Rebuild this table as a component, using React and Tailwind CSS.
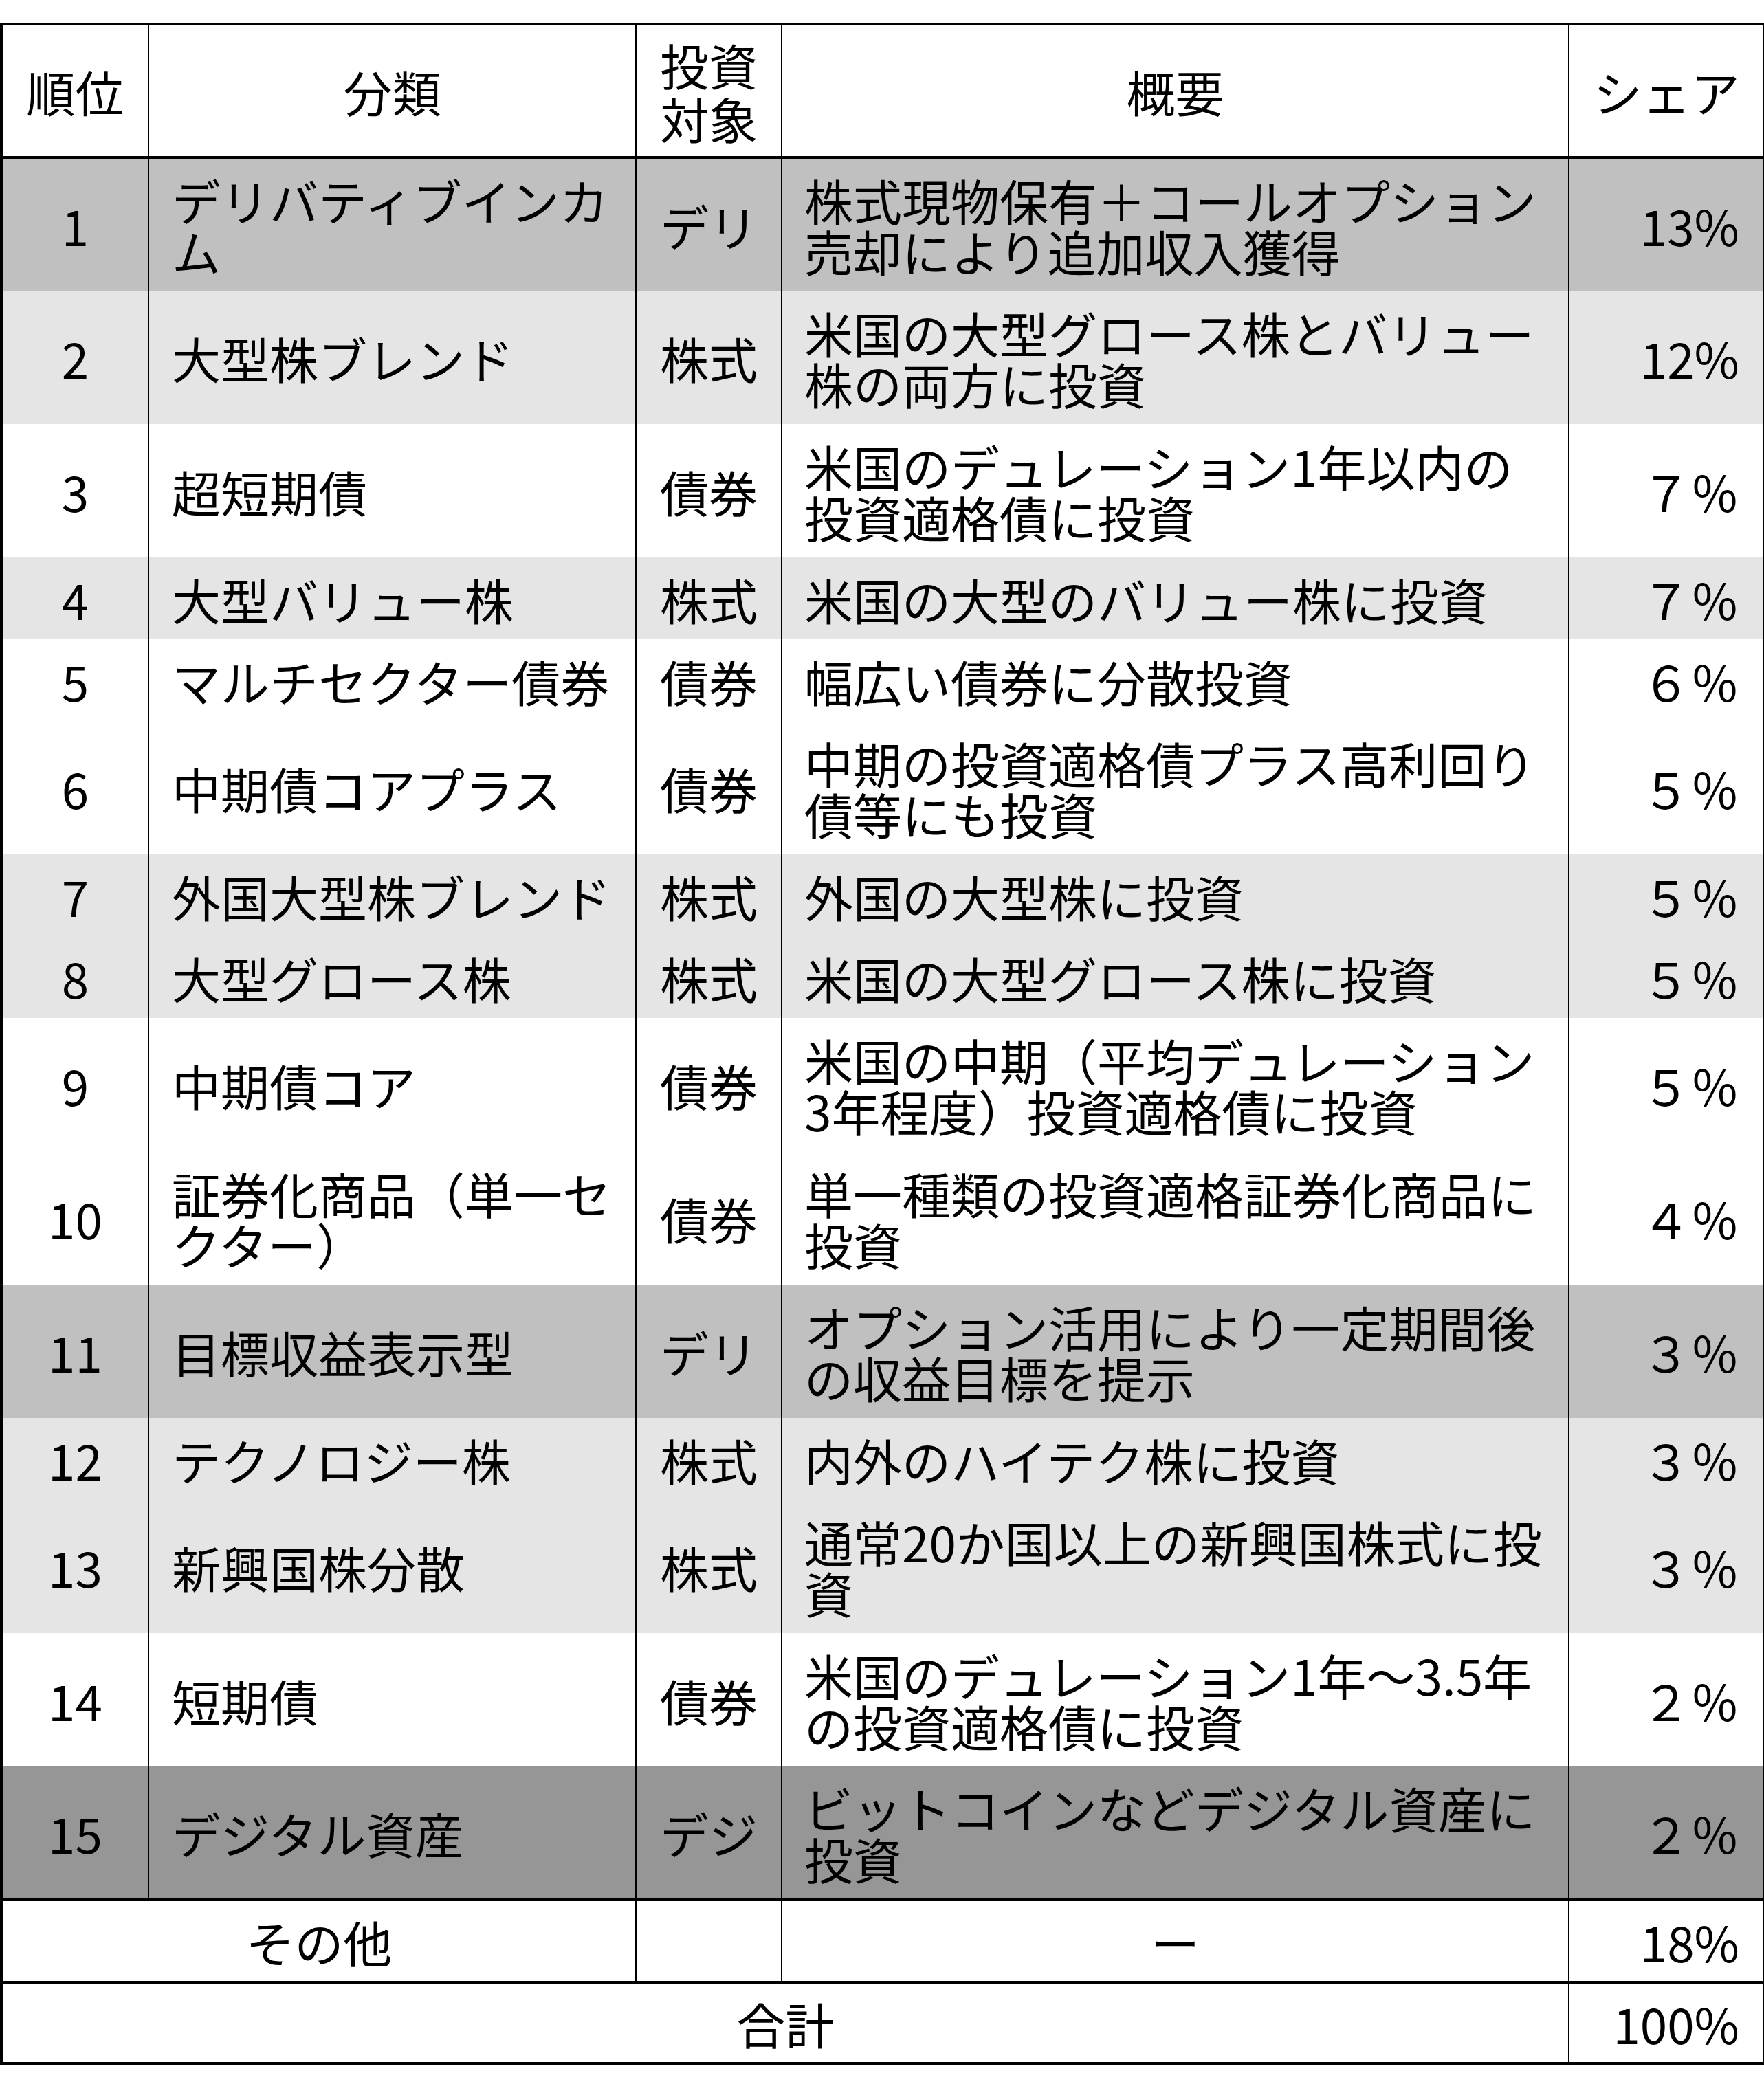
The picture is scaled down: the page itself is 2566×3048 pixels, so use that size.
import React from 'react';

const DARK = 'bg-[#bfc0bf]';
const LIGHT = 'bg-[#e5e5e5]';
const WHITE = 'bg-white';
const DARKER = 'bg-[#969696]';

const rows = [
  { no: '1', cat: ['デリバティブインカ', 'ム'], type: 'デリ', desc: ['株式現物保有＋コールオプション', '売却により追加収入獲得'], share: '13%', bg: DARK },
  { no: '2', cat: ['大型株ブレンド'], type: '株式', desc: ['米国の大型グロース株とバリュー', '株の両方に投資'], share: '12%', bg: LIGHT },
  { no: '3', cat: ['超短期債'], type: '債券', desc: ['米国のデュレーション1年以内の', '投資適格債に投資'], share: '７％', bg: WHITE },
  { no: '4', cat: ['大型バリュー株'], type: '株式', desc: ['米国の大型のバリュー株に投資'], share: '７％', bg: LIGHT },
  { no: '5', cat: ['マルチセクター債券'], type: '債券', desc: ['幅広い債券に分散投資'], share: '６％', bg: WHITE },
  { no: '6', cat: ['中期債コアプラス'], type: '債券', desc: ['中期の投資適格債プラス高利回り', '債等にも投資'], share: '５％', bg: WHITE },
  { no: '7', cat: ['外国大型株ブレンド'], type: '株式', desc: ['外国の大型株に投資'], share: '５％', bg: LIGHT },
  { no: '8', cat: ['大型グロース株'], type: '株式', desc: ['米国の大型グロース株に投資'], share: '５％', bg: LIGHT },
  { no: '9', cat: ['中期債コア'], type: '債券', desc: ['米国の中期（平均デュレーション', '3年程度）投資適格債に投資'], share: '５％', bg: WHITE },
  { no: '10', cat: ['証券化商品（単一セ', 'クター）'], type: '債券', desc: ['単一種類の投資適格証券化商品に', '投資'], share: '４％', bg: WHITE },
  { no: '11', cat: ['目標収益表示型'], type: 'デリ', desc: ['オプション活用により一定期間後', 'の収益目標を提示'], share: '３％', bg: DARK },
  { no: '12', cat: ['テクノロジー株'], type: '株式', desc: ['内外のハイテク株に投資'], share: '３％', bg: LIGHT },
  { no: '13', cat: ['新興国株分散'], type: '株式', desc: ['通常20か国以上の新興国株式に投', '資'], share: '３％', bg: LIGHT },
  { no: '14', cat: ['短期債'], type: '債券', desc: ['米国のデュレーション1年～3.5年', 'の投資適格債に投資'], share: '２％', bg: WHITE },
  { no: '15', cat: ['デジタル資産'], type: 'デジ', desc: ['ビットコインなどデジタル資産に', '投資'], share: '２％', bg: DARKER },
];

function Lines({ lines }) {
  return lines.map((l, i) => (
    <React.Fragment key={i}>
      {i > 0 && <br />}
      {l}
    </React.Fragment>
  ));
}

export default function App() {
  return (
    <div className="bg-white w-[2566px] pt-[33px] pb-[40px] font-['Noto_Sans_CJK_JP','Liberation_Sans',sans-serif] text-black">
      <table className="border-collapse border-4 border-black w-[2565px] table-fixed text-[71px] leading-[74px] whitespace-nowrap">
        <colgroup>
          <col className="w-[214px]" />
          <col className="w-[709px]" />
          <col className="w-[212px]" />
          <col className="w-[1145px]" />
          <col className="w-[285px]" />
        </colgroup>
        <thead>
          <tr className="h-[194px] border-b-4 border-black bg-white">
            <th className="font-normal text-center border-x-2 border-black">順位</th>
            <th className="font-normal text-center border-x-2 border-black">分類</th>
            <th className="font-normal text-center border-x-2 border-black leading-[78px]">投資<br />対象</th>
            <th className="font-normal text-center border-x-2 border-black">概要</th>
            <th className="font-normal text-center border-x-2 border-black">シェア</th>
          </tr>
        </thead>
        <tbody>
          {rows.map((r) => {
            const tall = r.cat.length > 1 || r.desc.length > 1;
            return (
              <tr key={r.no} className={`${r.bg} ${tall ? 'h-[194px]' : 'h-[119px]'}`}>
                <td className="text-center border-x-2 border-black">{r.no}</td>
                <td className="pl-[33px] border-x-2 border-black"><Lines lines={r.cat} /></td>
                <td className="text-center border-x-2 border-black">{r.type}</td>
                <td className="pl-[32px] border-x-2 border-black"><Lines lines={r.desc} /></td>
                <td className="text-right pr-[35px] border-x-2 border-black">{r.share}</td>
              </tr>
            );
          })}
          <tr className="h-[120px] border-t-4 border-black bg-white">
            <td colSpan={2} className="text-center border-x-2 border-black">その他</td>
            <td className="border-x-2 border-black"></td>
            <td className="text-center border-x-2 border-black">ー</td>
            <td className="text-right pr-[35px] border-x-2 border-black">18%</td>
          </tr>
          <tr className="h-[118px] border-t-4 border-black bg-white">
            <td colSpan={4} className="text-center border-x-2 border-black">合計</td>
            <td className="text-right pr-[35px] border-x-2 border-black">100%</td>
          </tr>
        </tbody>
      </table>
    </div>
  );
}
